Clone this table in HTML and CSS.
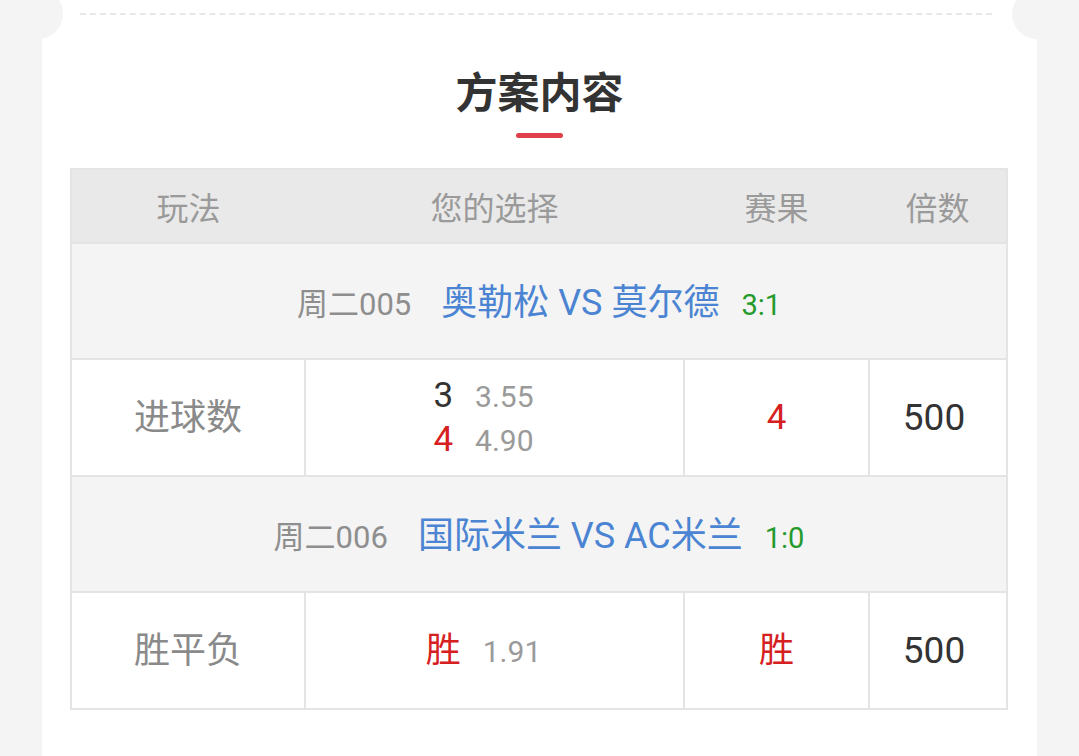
FILE: index.html
```html
<!DOCTYPE html>
<html lang="zh">
<head>
<meta charset="utf-8">
<title>方案内容</title>
<link rel="stylesheet" href="styles.css">
</head>
<body>
<div class="card">
  <div class="dash"></div>
  <h2 class="title">方案内容</h2>
  <div class="bar"></div>
  <table class="plan">
    <colgroup>
      <col class="c1"><col class="c2"><col class="c3"><col class="c4">
    </colgroup>
    <thead>
      <tr class="head">
        <th>玩法</th><th>您的选择</th><th>赛果</th><th>倍数</th>
      </tr>
    </thead>
    <tbody>
      <tr class="match">
        <td colspan="4">
          <span class="no">周二005</span><span class="teams">奥勒松 VS 莫尔德</span><span class="score">3:1</span>
        </td>
      </tr>
      <tr class="data">
        <td class="label">进球数</td>
        <td class="pick">
          <div class="line"><span class="sel">3</span><span class="odds">3.55</span></div>
          <div class="line"><span class="sel red">4</span><span class="odds">4.90</span></div>
        </td>
        <td class="res red">4</td>
        <td class="mult">500</td>
      </tr>
      <tr class="match">
        <td colspan="4">
          <span class="no">周二006</span><span class="teams">国际米兰 VS AC米兰</span><span class="score">1:0</span>
        </td>
      </tr>
      <tr class="data">
        <td class="label">胜平负</td>
        <td class="pick">
          <div class="line"><span class="sel red">胜</span><span class="odds">1.91</span></div>
        </td>
        <td class="res red">胜</td>
        <td class="mult">500</td>
      </tr>
    </tbody>
  </table>
</div>
</body>
</html>
```
FILE: styles.css
```css
html, body {
  margin: 0;
  padding: 0;
}
body {
  background: #f4f4f4;
  font-family: Roboto, "Noto Sans CJK SC", "Noto Sans", sans-serif;
  height: 756px;
  overflow: hidden;
}
.card {
  position: relative;
  margin: 0 42px;
  background: #ffffff;
  min-height: 756px;
  padding-top: 13px;
  box-sizing: border-box;
}
.card::before,
.card::after {
  content: "";
  position: absolute;
  top: -11px;
  width: 50px;
  height: 50px;
  border-radius: 50%;
  background: #f4f4f4;
}
.card::before { left: -29px; }
.card::after { right: -25px; }
.dash {
  margin: 0 45px 0 38px;
  border-top: 2px dashed #e8e8e8;
}
.title {
  margin: 50px 0 0;
  text-align: center;
  font-family: "Noto Sans CJK SC", sans-serif;
  font-size: 42px;
  line-height: 50px;
  font-weight: 700;
  color: #333333;
}
.bar {
  width: 47px;
  height: 5px;
  border-radius: 3px;
  background: #e0404a;
  margin: 18px auto 0;
}
.plan {
  margin: 30px 0 0 28px;
  width: 936px;
  border-collapse: collapse;
  table-layout: fixed;
  border: 2px solid #e4e4e4;
}
.c1 { width: 234px; }
.c2 { width: 379px; }
.c3 { width: 185px; }
.c4 { width: 138px; }
.head th {
  height: 72px;
  padding: 0;
  background: #e9e9e9;
  font-weight: 400;
  font-size: 32px;
  color: #9a9a9a;
  text-align: center;
}
.match td {
  height: 110px;
  padding: 0 0 4px;
  background: #f4f4f4;
  text-align: center;
  border-top: 2px solid #e4e4e4;
  white-space: nowrap;
}
.no {
  font-size: 31px;
  color: #8e8e8e;
  margin-right: 30px;
}
.teams {
  font-size: 36px;
  color: #4b84d2;
  margin-right: 22px;
}
.score {
  font-size: 29px;
  color: #249a2c;
}
.data td {
  height: 115px;
  padding: 0;
  background: #ffffff;
  text-align: center;
  border: 2px solid #e4e4e4;
  line-height: 44px;
}
.label {
  font-size: 36px;
  color: #8a8a8a;
}
.data td.pick {
  padding-right: 22px;
}
.line {
  display: flex;
  justify-content: center;
  align-items: baseline;
  height: 44px;
}
.sel {
  font-size: 35px;
  color: #333333;
  margin-right: 22px;
}
.odds {
  font-size: 30px;
  color: #9a9a9a;
}
.res {
  font-size: 35px;
}
.data td.mult {
  font-size: 37px;
  color: #333333;
  padding-right: 8px;
}
.red,
.sel.red {
  color: #d6201f;
}
```
